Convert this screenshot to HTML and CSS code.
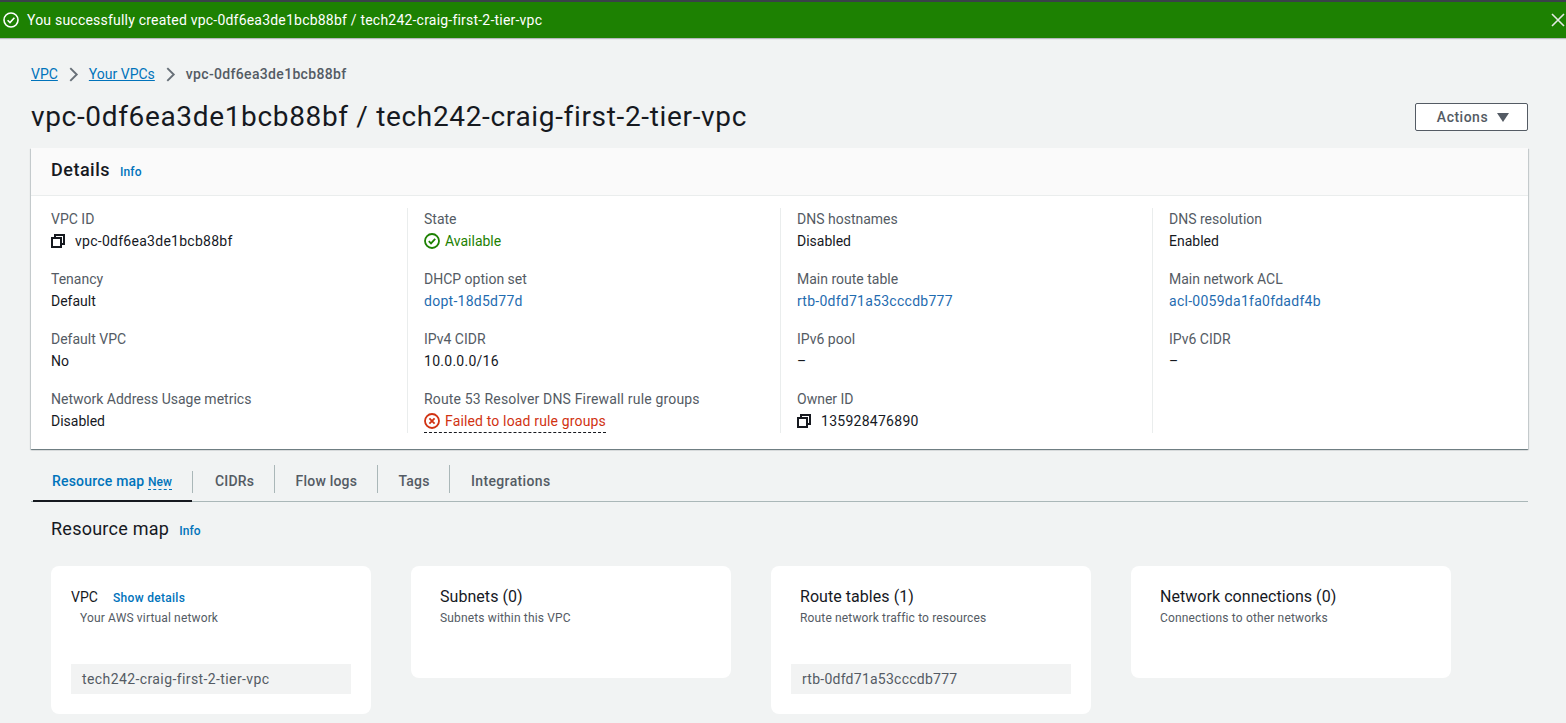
FILE: index.html
```html
<!DOCTYPE html>
<html lang="en">
<head>
    <meta charset="UTF-8">
    <title>vpc-0df6ea3de1bcb88bf | VPC Console</title>
    <link rel="stylesheet" href="styles.css">
</head>
<body>
    <div class="flash">
        <svg class="flash-icon" viewBox="0 0 16 16"><circle cx="8" cy="8" r="7"/><path d="M4.6 8.2l2.4 2.4 4.4-4.8"/></svg>
        <span class="flash-text">You successfully created vpc-0df6ea3de1bcb88bf / tech242-craig-first-2-tier-vpc</span>
        <svg class="flash-close" viewBox="0 0 14 14"><path d="M1 1l12 12M13 1L1 13"/></svg>
    </div>

    <div class="content">
        <nav class="crumbs">
            <a href="#">VPC</a>
            <svg class="crumb-sep" viewBox="0 0 10 14"><path d="M2 1l6 6-6 6"/></svg>
            <a href="#">Your VPCs</a>
            <svg class="crumb-sep" viewBox="0 0 10 14"><path d="M2 1l6 6-6 6"/></svg>
            <span class="crumb-current">vpc-0df6ea3de1bcb88bf</span>
        </nav>

        <div class="page-head">
            <h1>vpc-0df6ea3de1bcb88bf / tech242-craig-first-2-tier-vpc</h1>
            <button class="actions">Actions <span class="caret"></span></button>
        </div>

        <section class="details">
            <header class="details-head">
                <h2>Details</h2>
                <a class="info" href="#">Info</a>
            </header>
            <div class="details-grid">
                <div class="col">
                    <div class="field"><div class="label">VPC ID</div><div class="value with-copy id"><svg class="copy" viewBox="0 0 14 14"><path d="M4 4V1h9v9h-3"/><rect x="1" y="4" width="9" height="9"/></svg>vpc-0df6ea3de1bcb88bf</div></div>
                    <div class="field"><div class="label">Tenancy</div><div class="value">Default</div></div>
                    <div class="field"><div class="label">Default VPC</div><div class="value">No</div></div>
                    <div class="field"><div class="label">Network Address Usage metrics</div><div class="value">Disabled</div></div>
                </div>
                <div class="col">
                    <div class="field"><div class="label">State</div><div class="value status ok"><svg viewBox="0 0 16 16"><circle cx="8" cy="8" r="7"/><path d="M4.8 8.2l2.2 2.2 4.2-4.6"/></svg>Available</div></div>
                    <div class="field"><div class="label">DHCP option set</div><div class="value id"><a href="#">dopt-18d5d77d</a></div></div>
                    <div class="field"><div class="label">IPv4 CIDR</div><div class="value id">10.0.0.0/16</div></div>
                    <div class="field"><div class="label label-wide">Route 53 Resolver DNS Firewall rule groups</div><div class="value status err"><svg viewBox="0 0 16 16"><circle cx="8" cy="8" r="7"/><path d="M5.4 5.4l5.2 5.2M10.6 5.4l-5.2 5.2"/></svg>Failed to load rule groups</div></div>
                </div>
                <div class="col">
                    <div class="field"><div class="label">DNS hostnames</div><div class="value">Disabled</div></div>
                    <div class="field"><div class="label">Main route table</div><div class="value id"><a href="#">rtb-0dfd71a53cccdb777</a></div></div>
                    <div class="field"><div class="label">IPv6 pool</div><div class="value">–</div></div>
                    <div class="field"><div class="label">Owner ID</div><div class="value with-copy id"><svg class="copy" viewBox="0 0 14 14"><path d="M4 4V1h9v9h-3"/><rect x="1" y="4" width="9" height="9"/></svg>135928476890</div></div>
                </div>
                <div class="col">
                    <div class="field"><div class="label">DNS resolution</div><div class="value">Enabled</div></div>
                    <div class="field"><div class="label">Main network ACL</div><div class="value id"><a href="#">acl-0059da1fa0fdadf4b</a></div></div>
                    <div class="field"><div class="label">IPv6 CIDR</div><div class="value">–</div></div>
                </div>
            </div>
        </section>

        <div class="tabs">
            <a class="tab active" href="#">Resource map <span class="new">New</span></a>
            <a class="tab" href="#">CIDRs</a>
            <a class="tab" href="#">Flow logs</a>
            <a class="tab" href="#">Tags</a>
            <a class="tab" href="#">Integrations</a>
        </div>

        <div class="map">
            <div class="map-head">
                <h2>Resource map</h2>
                <a class="info" href="#">Info</a>
            </div>
            <div class="map-cards">
                <div class="card card-vpc">
                    <div class="card-title"><span class="vpc-name">VPC</span><a class="show" href="#">Show details</a></div>
                    <div class="card-sub">Your AWS virtual network</div>
                    <div class="chip">tech242-craig-first-2-tier-vpc</div>
                </div>
                <div class="card card-short">
                    <div class="card-title">Subnets (0)</div>
                    <div class="card-sub">Subnets within this VPC</div>
                </div>
                <div class="card card-route">
                    <div class="card-title">Route tables (1)</div>
                    <div class="card-sub">Route network traffic to resources</div>
                    <div class="chip">rtb-0dfd71a53cccdb777</div>
                </div>
                <div class="card card-short">
                    <div class="card-title">Network connections (0)</div>
                    <div class="card-sub">Connections to other networks</div>
                </div>
            </div>
        </div>
    </div>
</body>
</html>
```

FILE: styles.css
```css
html, body {
    height: 723px;
    overflow: hidden;
}
body {
    margin: 0;
    background-color: #f1f3f3;
    color: #16191f;
    font-family: Roboto, "Noto Sans", sans-serif;
    font-size: 14px;
    line-height: 20px;
}
a {
    color: #0073bb;
    text-decoration: none;
}
h1, h2 {
    margin: 0;
    font-weight: 400;
}

/* flash bar */
.flash {
    display: flex;
    align-items: center;
    height: 36px;
    padding: 0 1px 0 3px;
    background-color: #1d8102;
    border-top: 2px solid #3a4149;
    box-shadow: 0 1px 1px #b5b9bb;
    color: #fff;
}
.flash-icon {
    width: 16px;
    height: 16px;
    margin-right: 8px;
    fill: none;
    stroke: #fff;
    stroke-width: 1.6;
}
.flash-text {
    flex: 1;
    letter-spacing: 0.21px;
}
.flash-close {
    width: 14px;
    height: 14px;
    fill: none;
    stroke: #e4e8e4;
    stroke-width: 1.6;
}

.content {
    padding: 26px 38px 0 31px;
}

/* breadcrumbs */
.crumbs {
    display: flex;
    align-items: center;
    height: 20px;
    gap: 10px;
}
.crumbs a {
    color: #0073bb;
    text-decoration: underline;
}
.crumb-sep {
    width: 11px;
    height: 15px;
    fill: none;
    stroke: #687078;
    stroke-width: 1.8;
}
.crumb-current {
    color: #545b64;
    font-weight: 500;
    letter-spacing: 0.33px;
}

.page-head {
    display: flex;
    justify-content: space-between;
    align-items: center;
    height: 36px;
    margin-top: 15px;
}
h1 {
    font-size: 28px;
    line-height: 36px;
    letter-spacing: 0.66px;
}
.actions {
    display: flex;
    align-items: center;
    justify-content: center;
    gap: 9px;
    width: 113px;
    height: 28px;
    padding: 0 0 0 3px;
    background: #fff;
    border: 1px solid #545b64;
    border-radius: 2px;
    color: #545b64;
    font-family: inherit;
    font-size: 14px;
    font-weight: 500;
    letter-spacing: 0.5px;
}
.caret {
    width: 0;
    height: 0;
    border-left: 6px solid transparent;
    border-right: 6px solid transparent;
    border-top: 9px solid #545b64;
}

/* details card */
.details {
    margin-top: 13px;
    background: #fff;
    box-shadow: 0 1px 1px 0 rgba(0, 28, 36, 0.4), 1px 1px 1px 0 rgba(0, 28, 36, 0.12), -1px 1px 1px 0 rgba(0, 28, 36, 0.12);
}
.details-head {
    display: flex;
    align-items: flex-start;
    gap: 10px;
    height: 48px;
    box-sizing: border-box;
    padding: 10px 20px 0;
    background: #fafafa;
    border-bottom: 1px solid #eaeded;
}
h2 {
    font-size: 18px;
    line-height: 24px;
    font-weight: 500;
    letter-spacing: 0.5px;
}
.info {
    margin-top: 2px;
    font-size: 12px;
    line-height: 24px;
    font-weight: 500;
    letter-spacing: 0.1px;
}
.details-grid {
    display: grid;
    grid-template-columns: 377px 373px 372px 1fr;
    padding: 12px 0 16px;
}
.col {
    height: 225px;
    padding-left: 20px;
    border-right: 1px solid #eaeded;
}
.col + .col {
    padding-left: 16px;
}
.col:last-child {
    border-right: 0;
}
.field {
    height: 60px;
}
.label {
    height: 22px;
    line-height: 22px;
    color: #545b64;
}
.label-wide {
    letter-spacing: 0.17px;
}
.value {
    display: flex;
    align-items: center;
    height: 22px;
}
.value.id {
    letter-spacing: 0.27px;
}
.value a {
    color: #1f6cb0;
}
.copy {
    width: 14px;
    height: 14px;
    margin-right: 10px;
    fill: none;
    stroke: #16191f;
    stroke-width: 2;
}
.status svg {
    width: 16px;
    height: 16px;
    margin-right: 5px;
    fill: none;
    stroke-width: 1.8;
}
.ok {
    color: #1d8102;
}
.ok svg {
    stroke: #1d8102;
}
.err {
    width: max-content;
    color: #d13212;
    letter-spacing: 0.15px;
    border-bottom: 1px dashed #16191f;
}
.err svg {
    stroke: #d13212;
}

/* tabs */
.tabs {
    display: flex;
    align-items: flex-start;
    height: 36px;
    margin-top: 16px;
    border-bottom: 1px solid #aab7b8;
}
.tab {
    position: relative;
    height: 22px;
    padding: 6px 19.4px 0 21px;
    color: #545b64;
    font-weight: 500;
    letter-spacing: 0.2px;
    border-right: 1px solid #aab7b8;
}
.tab:last-child {
    border-right: 0;
    letter-spacing: 0.35px;
}
.tab.active {
    height: 36px;
    box-sizing: border-box;
    padding-right: 22px;
    color: #0073bb;
    border-right: 0;
}
.tab.active::before {
    content: "";
    position: absolute;
    top: 6px;
    right: 1px;
    width: 1px;
    height: 22px;
    background: #aab7b8;
}
.tab.active::after {
    content: "";
    position: absolute;
    left: 2px;
    right: 2px;
    bottom: -1px;
    height: 2px;
    background: #16191f;
}
.new {
    font-size: 12px;
    letter-spacing: 0;
    border-bottom: 1px dashed #0073bb;
}

/* resource map */
.map {
    padding: 15px 20px 0;
}
.map-head {
    display: flex;
    align-items: flex-start;
    gap: 10px;
}
.map-head h2 {
    font-weight: 400;
    letter-spacing: 0.25px;
}
.map-cards {
    display: flex;
    align-items: flex-start;
    gap: 40px;
    margin-top: 23px;
}
.card {
    box-sizing: border-box;
    width: 320px;
    background: #fff;
    border-radius: 8px;
}
.card-short {
    height: 112px;
    padding: 21px 29px;
}
.card-vpc {
    height: 148px;
    padding: 21px 20px;
}
.card-route {
    height: 148px;
    padding: 21px 20px 20px 29px;
}
.card-title {
    height: 20px;
    font-size: 16px;
    line-height: 20px;
    letter-spacing: 0.05px;
}
.card-sub {
    margin-top: 2px;
    color: #545b64;
    font-size: 12px;
    line-height: 18px;
    letter-spacing: 0.15px;
}
.vpc-name {
    font-size: 14px;
}
.show {
    margin-left: 15px;
    font-size: 12px;
    font-weight: 500;
    letter-spacing: 0.3px;
}
.card-vpc .card-sub {
    padding-left: 9px;
}
.chip {
    width: 280px;
    height: 30px;
    box-sizing: border-box;
    margin-top: 37px;
    padding: 0 11px;
    background: #f2f3f3;
    color: #545b64;
    line-height: 30px;
    letter-spacing: 0.4px;
}
.card-route .chip {
    margin-left: -9px;
    letter-spacing: 0.25px;
}
```
